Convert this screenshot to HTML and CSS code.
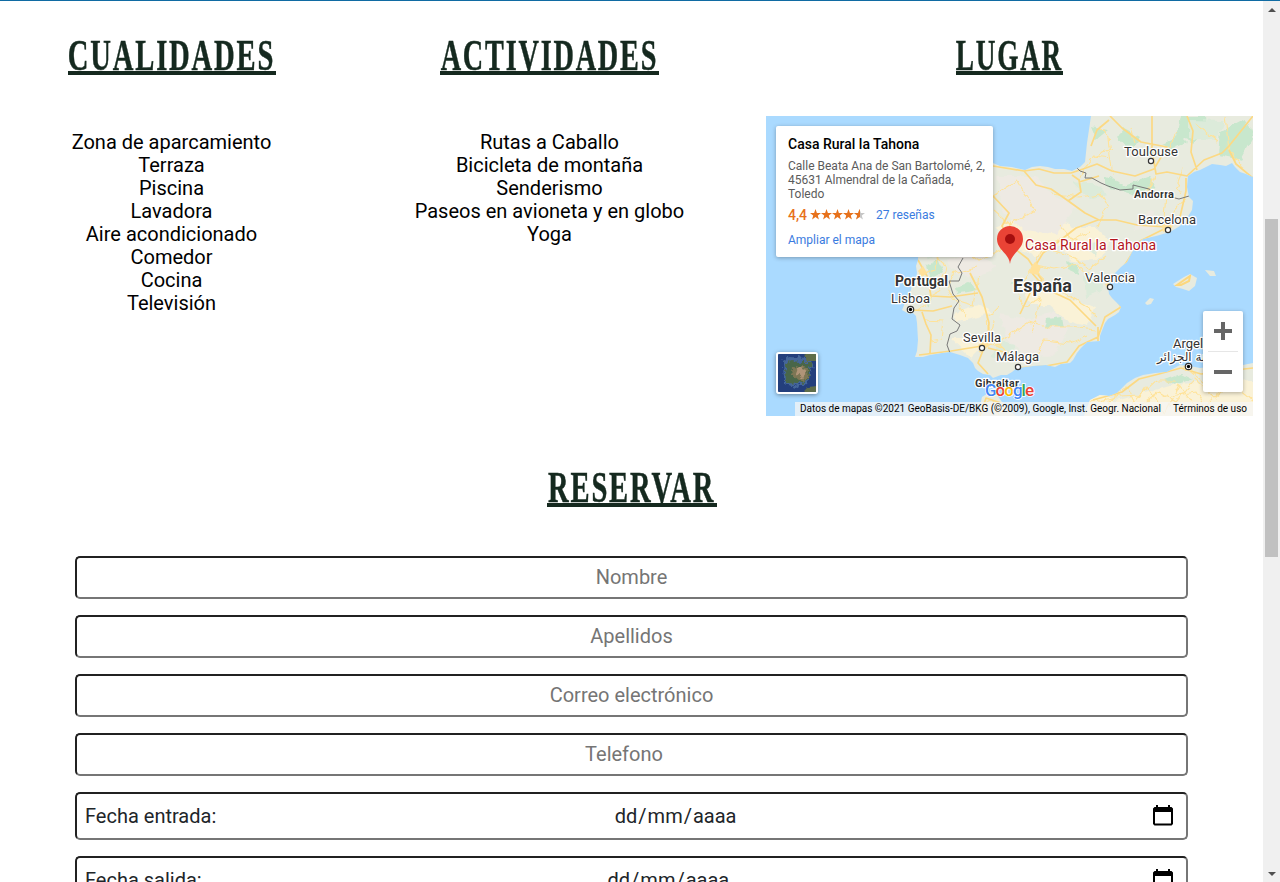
FILE: index.html
```html
<!DOCTYPE html>
<html lang="es">
<head>
<meta charset="utf-8">
<title>Casa Rural la Tahona</title>
<link rel="stylesheet" href="styles.css">
</head>
<body>
<div class="window">
<main class="page">
  <section class="info">
    <div class="col">
      <h2 class="title title-qualities"><span>CUALIDADES</span></h2>
      <ul class="list"><li>Zona de aparcamiento</li><li>Terraza</li><li>Piscina</li><li>Lavadora</li><li>Aire acondicionado</li><li>Comedor</li><li>Cocina</li><li>Televisión</li></ul>
    </div>
    <div class="col">
      <h2 class="title title-activities"><span>ACTIVIDADES</span></h2>
      <ul class="list"><li>Rutas a Caballo</li><li>Bicicleta de montaña</li><li>Senderismo</li><li>Paseos en avioneta y en globo</li><li>Yoga</li></ul>
    </div>
    <div class="col">
      <h2 class="title title-place"><span>LUGAR</span></h2>
      <div class="map">
        <svg class="map-canvas" width="487" height="300" viewBox="0 0 487 300">
          <defs>
            <clipPath id="land"><path id="coast" d="M227 47L234 50 246 51 259 54 266 51 274 50 282 51 289 53 298 53 306 55 314 51 319 46 321 27 325 0H487V61L480 58 474 56 469 51 466 47 460 50 454 49 446 48 440 51 434 54 428 56 422 60 421 71 423 81 427 85 426 94 421 102 414 110 404 116 390 120 377 123 370 129 367 134 361 146 355 151 349 157 345 163 342 171 343 178 346 182 350 186 355 191 353 196 349 199 342 203 339 207 337 212 334 220 334 225 321 226 315 232 311 237 307 244 304 247 295 248 289 251 280 249 267 250 251 252 246 256 241 259 235 259 227 262 224 259 217 258 212 255 209 252 207 247 202 242 194 239 184 236 176 237 164 239 157 241 149 241 151 235 152 224 151 207 150 200 147 197 143 198 136 194 139 187 141 181 145 174 146 167 150 162 151 157 150 150 152 144 154 100 149 70 155 55 175 49Z
            M324 284L334 279 343 280 351 277 361 267 369 262 377 259 389 257 401 256 414 249 424 250 434 252 451 250 477 249 487 247V300H318Z
            M212 300L214 290 216 281 224 276 231 279 236 286 250 300Z
            M407 168L418 161 424 158 431 162 429 170 423 175 417 173 410 171ZM439 154L448 155 450 160 444 160ZM379 187L384 182 388 183 385 188 381 189Z"/></clipPath>
            <filter id="rough" x="-5%" y="-5%" width="110%" height="110%"><feTurbulence baseFrequency=".1" numOctaves="2" seed="4"/><feDisplacementMap in="SourceGraphic" scale="7" xChannelSelector="R" yChannelSelector="G"/></filter>
            <filter id="wiggle" x="-5%" y="-5%" width="110%" height="110%"><feTurbulence type="fractalNoise" baseFrequency=".12" numOctaves="2" seed="9"/><feDisplacementMap in="SourceGraphic" scale="7" xChannelSelector="R" yChannelSelector="G"/></filter>
          </defs>
          <rect width="487" height="300" fill="#aadaff"/>
          <g clip-path="url(#land)">
            <rect width="487" height="300" fill="#e8ebdf"/>
            <g filter="url(#wiggle)">
              <g fill="#faf2d7">
                <path d="M229 112L250 103 285 98 305 111 330 111 344 125 334 142 306 146 294 130 270 140 248 130ZM254 165L284 170 308 185 330 190 321 210 302 205 284 189 264 189ZM304 255L350 285 411 268 487 264V310H320ZM184 222L225 222 205 242ZM188 196L215 188 225 197 190 207Z"/>
              </g>
              <g fill="#eeeae3">
                <path d="M232 60L270 60 285 78 310 90 291 119 255 113 236 95ZM234 198L265 204 288 194 302 214 287 241 260 240 240 222ZM372 101L390 94 388 113 368 115ZM180 145L212 136 230 151 213 162 190 158Z"/>
              </g>
              <g fill="#c8e7cd">
                <path d="M325 11L341 14 330 23ZM357 13L374 22 364 35 351 21ZM414 0L440 0 441 13 427 27 410 20ZM455 15L480 2 487 22 475 44 453 39ZM396 28L414 20 421 27 405 33ZM339 60L359 69 384 60 389 73 370 79 339 70ZM281 203L295 201 297 211 279 211ZM160 150L172 144 177 155 164 164ZM190 171L205 166 211 174 191 178ZM301 145L313 150 312 158 303 154ZM158 178L166 184 162 190ZM292 260L330 258 346 265 329 274ZM399 264L416 258 426 263 409 269ZM244 168L254 164 256 171Z"/>
              </g>
              <g fill="#dcebda"><path d="M155 120L175 119 179 136 163 143ZM232 225L249 229 245 244 224 241ZM318 162L335 156 338 173 320 181ZM305 65L330 68 341 79 324 83ZM423 4L459 5 451 24 423 22ZM316 129L333 127 329 140Z"/></g>
            </g>
            <g fill="none" stroke="#ffe399" stroke-width="1.1" filter="url(#wiggle)">
              <path d="M227 80L251 65 268 94 244 109 228 95M285 77L312 81 335 78 342 90 335 103 332 110M244 105L234 135 213 145 196 133M313 64L325 43 347 32M347 60L342 23 335 10M364 12L369 26M402 32L411 17M400 80L397 112M421 80L404 101 391 109M269 132L296 123 320 130M294 108L307 124 324 116M268 147L277 131 309 142 323 153 340 140M270 149L289 153 312 148 323 160M267 154L284 170 302 179 319 189 330 200M264 153L251 177 257 191 274 183 267 217M235 225L263 206 280 211 305 211 329 214M212 161L207 189 186 183M212 151L188 157 182 173 200 200M227 205L224 222 235 232M158 183L174 174 180 150 167 137M158 204L178 205 176 223 165 225M233 190L221 202 224 230M213 237L230 225 248 243M270 239L279 224 305 227 322 220"/>
              <path d="M324 287L354 280 374 279 390 265 412 265M342 286L360 270 371 291 393 276 410 286 429 263 449 282 474 261M360 299L381 270 399 298 414 269 435 298 460 268M420 252L443 271 465 265 487 284M444 299L431 276 404 280M215 290L226 284 233 299"/>
              <path d="M459 0L463 34 477 53M428 8L452 25M327 40L346 42M382 76L389 60M417 53L410 71 416 78M154 158L169 153 173 142M153 195L165 182"/>
            </g>
            <g fill="none" stroke="#fcd983" stroke-width="1.7" stroke-linejoin="round">
              <path d="M227 50L258 55 273 53 288 57 305 57 317 53 331 48 346 55 369 60 388 53 401 31 375 26 356 12 344 0M325 30L331 14 343 4M386 0L386 34 390 58 401 56 421 60 438 44 456 37 463 30 487 0M431 54L425 36 427 15 421 0M463 34L470 48 487 62M420 62L420 75 414 101 400 111 371 109 350 104 333 104 319 97 301 84 285 73 270 69 258 55M302 85L315 76 313 64 306 59M313 66L333 60M332 104L310 112 292 126 277 137 268 152 262 143 249 133 236 110 243 97 227 80M400 112L374 125 355 155 343 171 350 183 355 191 339 201 332 221 313 230 301 246 280 250 250 252M268 153L276 164 265 175 254 198M266 157L280 173 304 184 330 210M332 211L332 225M152 144L161 160 165 180 184 181 212 177M145 194L167 195 186 190M156 196L160 208 165 219 164 237M153 239L185 235 216 230 221 228 223 207 216 181 204 157M218 232L212 247 222 258M264 247L238 236 222 232"/>
              <path d="M327 284L356 276 373 263 393 258 415 252 435 258 487 252M214 300L220 282 235 287"/>
            </g>
            <path d="M265 151l4-5 6 5-3 8-9-2zM396 109l12-4-2 7-9 4zM152 155l5-5 4 7-5 4zM339 168l6-2 1 5-5 1zM212 229l6-4 5 5-6 4zM417 250l6 0 4 5-8 0z" fill="#ffe19a"/>
            <g fill="none" stroke="#777" stroke-width="1">
              <path d="M311 52L314 55 320 57 319 62 326 62 335 67 342 70 354 74 367 73 367 69 383 73 397 79 413 83 423 80"/>
              <path d="M197 142L192 151 196 157 193 165 183 165 187 178 193 185 188 192 186 203 194 209 191 215 184 218 181 229 184 237"/>
            </g>
            <path d="M411 169l13-9-1 5-8 4z" fill="none" stroke="#fcd77c" stroke-width="2"/>
          </g>
          <g fill="#fff" stroke="#333" stroke-width="1.2">
            <circle cx="385" cy="45" r="2.6"/><circle cx="402" cy="114" r="2.6"/><circle cx="344" cy="171" r="2.6"/><circle cx="216" cy="232" r="2.6"/><circle cx="252" cy="251" r="2.6"/>
            <circle cx="144.500" cy="193.500" r="3.200"/><circle cx="422.500" cy="250.500" r="3.200"/>
          </g>
          <circle cx="144.500" cy="193.500" r="1.700"/><circle cx="422.500" cy="250.500" r="1.700"/>
          <g class="label">
            <text x="358" y="40" textLength="54">Toulouse</text>
            <text x="372" y="108" textLength="58">Barcelona</text>
            <text x="319" y="166" textLength="50">Valencia</text>
            <text x="125" y="187" textLength="39">Lisboa</text>
            <text x="197" y="226" textLength="38">Sevilla</text>
            <text x="230" y="245" textLength="43">Málaga</text>
            <text x="407" y="232">Argel</text>
            <text class="arabic" x="391" y="245" direction="ltr">مدينة الجزائر</text>
            <text class="small-bold" x="368" y="82" textLength="40">Andorra</text>
            <text class="small-bold" x="209" y="271" textLength="44">Gibraltar</text>
            <text class="country" x="129" y="170" textLength="53">Portugal</text>
            <text class="spain" x="247" y="176" textLength="59">España</text>
            <text class="place" x="259" y="134" textLength="131">Casa Rural la Tahona</text>
          </g>
          <path d="M244 148C243 137 231 134 231 123a13 13 0 0 1 26 0C257 134 245 137 244 148Z" fill="#ea4335"/>
          <circle cx="244" cy="123" r="5" fill="#a50e0e"/>
          <text class="google" x="219" y="280" textLength="49"><tspan fill="#4285f4">G</tspan><tspan fill="#ea4335">o</tspan><tspan fill="#fbbc04">o</tspan><tspan fill="#4285f4">g</tspan><tspan fill="#34a853">l</tspan><tspan fill="#ea4335">e</tspan></text>
        </svg>
        <div class="card">
          <div class="card-name">Casa Rural la Tahona</div>
          <div class="card-address">Calle Beata Ana de San Bartolomé, 2,<br>45631 Almendral de la Cañada,<br>Toledo</div>
          <div class="rating"><span class="score">4,4</span>
            <svg class="stars" width="55" height="11" viewBox="0 0 55 11"><defs><path id="star" d="M5.500 0L6.900 3.900 11 4 7.800 6.400 8.900 10.500 5.500 8.100 2.100 10.500 3.200 6.400 0 4 4.100 3.900Z"/><clipPath id="half"><path d="M0 0H50V11H0Z"/></clipPath></defs><use href="#star" x="44" fill="#c6c6c6"/><g fill="#e7711b" clip-path="url(#half)"><use href="#star"/><use href="#star" x="11"/><use href="#star" x="22"/><use href="#star" x="33"/><use href="#star" x="44"/></g></svg>
            <span class="link">27 reseñas</span></div>
          <div class="link">Ampliar el mapa</div>
        </div>
        <div class="satellite"><svg width="38" height="38" viewBox="0 0 38 38"><defs><filter id="grain"><feTurbulence type="fractalNoise" baseFrequency=".25" numOctaves="3" seed="7"/><feDisplacementMap in="SourceGraphic" scale="8" xChannelSelector="R" yChannelSelector="G"/></filter></defs><rect width="38" height="38" fill="#243f7c"/><g filter="url(#grain)"><path d="M5 7L11 3 32 4 35 12 30 28 19 33 6 30Z" fill="#44669a"/><path d="M7 9L13 7 23 8 34 8 30 25 21 30 8 29Z" fill="#4a6648"/><path d="M16 12l14 2-1 12-7 1-9-8z" fill="#7d7654"/><path d="M20 13l8 3-3 9-7-6z" fill="#b09478"/><path d="M26 -3h14v10h-11zM23 40l6-6 12-1v8z" fill="#5f6d48"/></g></svg></div>
        <div class="zoom"><span class="plus"></span><span class="rule"></span><span class="minus"></span></div>
        <div class="credits"><span>Datos de mapas ©2021 GeoBasis-DE/BKG (©2009), Google, Inst. Geogr. Nacional</span><span>Términos de uso</span></div>
      </div>
    </div>
  </section>
  <section class="booking">
    <h2 class="title title-booking"><span>RESERVAR</span></h2>
    <form class="form">
      <input class="field" type="text" placeholder="Nombre">
      <input class="field" type="text" placeholder="Apellidos">
      <input class="field" type="text" placeholder="Correo electrónico">
      <input class="field phone" type="text" placeholder="Telefono">
      <div class="field date"><span>Fecha entrada:</span><span class="value">dd<i>/</i>mm<i>/</i>aaaa</span><svg class="calendar" width="20" height="22" viewBox="0 0 20 22"><path d="M3 0h2v2h10V0h2v2h1.500l1.500 1.500v15.500l-1.500 1.500H1.500L0 19V3.500L1.500 2H3ZM2 7v11.500h16V7Z" fill-rule="evenodd"/></svg></div>
      <div class="field date"><span>Fecha salida:</span><span class="value">dd<i>/</i>mm<i>/</i>aaaa</span><svg class="calendar" width="20" height="22" viewBox="0 0 20 22"><path d="M3 0h2v2h10V0h2v2h1.500l1.500 1.500v15.500l-1.500 1.500H1.500L0 19V3.500L1.500 2H3ZM2 7v11.500h16V7Z" fill-rule="evenodd"/></svg></div>
    </form>
  </section>
</main>
<aside class="scrollbar"><span class="arrow up"></span><span class="thumb"></span><span class="arrow down"></span></aside>
</div>
</body>
</html>
```
FILE: styles.css
```css
* { box-sizing: border-box; }
body { margin: 0; font-family: Roboto, sans-serif; color: #000; background: #fff; }
.window { height: 882px; overflow: hidden; display: flex; border-top: 1px solid #106ba3; }
.page { width: 1263px; height: 881px; overflow: hidden; }
.info { display: grid; grid-template-columns: 343px 413px 507px; height: 435px; padding-top: 32px; }
.col { display: flex; flex-direction: column; align-items: center; }
.title { margin: 0; height: 42px; border-bottom: 4px solid #15291f; display: flex; justify-content: center; font: bold 44px/46px "Liberation Serif", serif; letter-spacing: 2.8px; color: #15291f; white-space: nowrap; }
.title span { flex: none; transform: scaleX(.65); -webkit-text-stroke: .5px #15291f; }
.title-qualities { width: 208px; }
.title-activities { width: 219px; }
.title-activities span { transform: scaleX(.642); }
.title-place { width: 107px; }
.title-place span { transform: scaleX(.62); }
.title-booking { width: 170px; }
.list { list-style: none; margin: 56px 0 0; padding: 0; font-size: 20px; line-height: 23px; text-align: center; }
.map { position: relative; width: 487px; height: 300px; margin-top: 41px; overflow: hidden; }
.map-canvas { display: block; }
.label { font-size: 13px; fill: #333; stroke: #fff; stroke-width: 2.5px; stroke-linejoin: round; paint-order: stroke; }
.small-bold { font-size: 11px; font-weight: 700; }
.country { font-size: 14px; font-weight: 700; }
.spain { font-size: 18px; font-weight: 700; }
.place { font-size: 14px; fill: #b3141c; }
.arabic { font: 12px "DejaVu Sans", sans-serif; }
.google { font: 500 17px Roboto, sans-serif; stroke: #fff; stroke-width: 1.5px; paint-order: stroke; }
.card { position: absolute; left: 10px; top: 10px; width: 217px; height: 131px; padding: 10px 0 0 12px; background: #fff; border-radius: 2px; box-shadow: 0 1px 4px rgba(0,0,0,.3); font-size: 12px; line-height: 14px; white-space: nowrap; }
.card-name { font-size: 14px; font-weight: 500; line-height: 16px; }
.card-address { margin-top: 7px; color: #5b5b5b; }
.rating { display: flex; align-items: center; height: 14px; margin: 7px 0 11px; }
.score { color: #e7711b; font-size: 14px; font-weight: 500; width: 22px; }
.stars { margin: -2px 11px 0 0; }
.link { color: #3a7be0; }
.satellite { position: absolute; left: 10px; top: 236px; width: 42px; height: 42px; border: 2px solid #fff; border-radius: 3px; box-shadow: 0 1px 4px rgba(0,0,0,.4); overflow: hidden; }
.satellite svg { display: block; }
.zoom { position: absolute; left: 437px; top: 195px; width: 40px; height: 81px; background: #fff; border-radius: 2px; box-shadow: 0 1px 4px rgba(0,0,0,.3); display: flex; flex-direction: column; align-items: center; padding-top: 11px; }
.plus { width: 18px; height: 18px; background: linear-gradient(#666,#666) center/18px 4px no-repeat, linear-gradient(#666,#666) center/4px 18px no-repeat; }
.rule { width: 30px; height: 1px; background: #e6e6e6; margin: 11px 0 18px; }
.minus { width: 18px; height: 4px; background: #666; }
.credits { position: absolute; right: 0; bottom: 0; width: 458px; height: 14px; padding: 0 6px 0 5px; display: flex; justify-content: space-between; background: rgba(245,245,245,.75); font-size: 10px; line-height: 14px; white-space: nowrap; }
.booking { display: flex; flex-direction: column; align-items: center; padding-top: 29px; }
.form { width: 1113px; margin-top: 49px; display: flex; flex-direction: column; gap: 16px; }
.field { width: 100%; height: 43px; flex: none; padding: 0 8px 2px; border: 2px solid #767676; border-top-color: #212121; border-left-color: #212121; border-radius: 5px; background: #fff; font: 20px Roboto, sans-serif; text-align: center; color: #212529; }
.field::placeholder { color: #757575; }
.phone { padding-right: 23px; }
.date { height: 48px; display: flex; align-items: center; padding: 0 8px; }
.value { flex: 1; text-align: center; }
.value i { font-style: normal; margin: 0 1px; }
.calendar { margin: 0 5px 0 18px; }
.scrollbar { width: 17px; height: 881px; background: #f0f0f0; display: flex; flex-direction: column; align-items: center; padding: 7px 0 6px; }
.arrow { border: 4px solid transparent; width: 0; height: 0; }
.up { border-top: 0; border-bottom-color: #505050; }
.down { border-bottom: 0; border-top-color: #505050; margin-top: auto; }
.thumb { width: 13px; height: 338px; background: #c1c1c1; margin-top: 207px; }
```
